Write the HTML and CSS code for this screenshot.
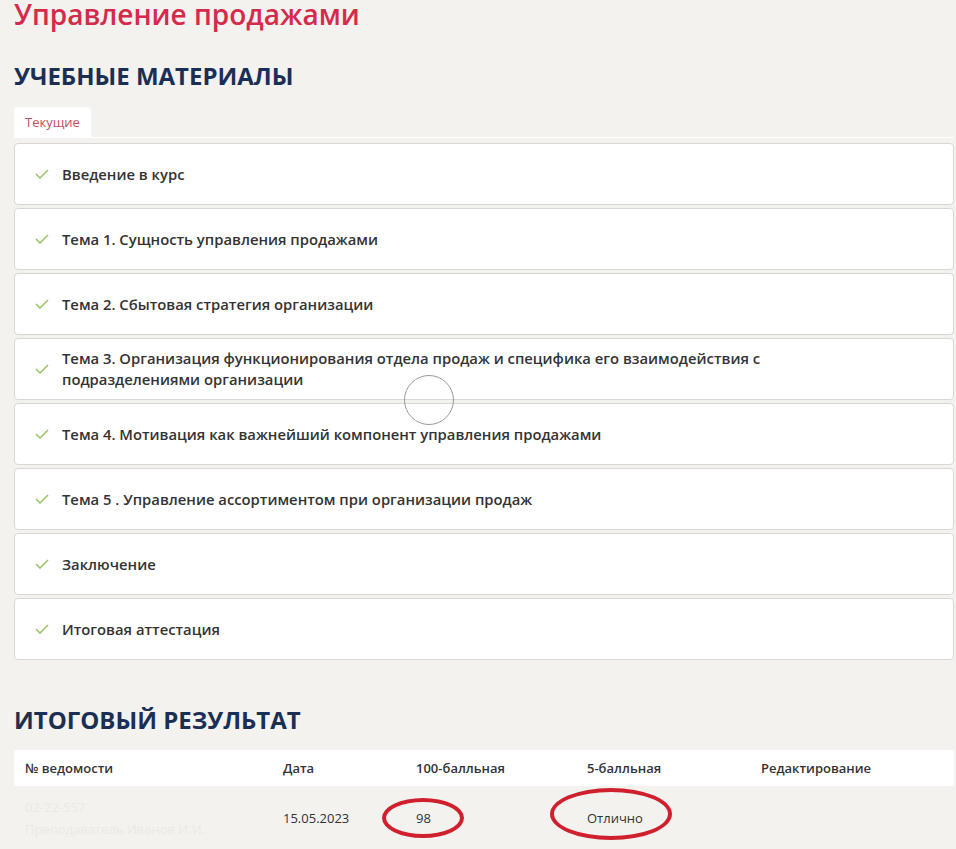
FILE: index.html
```html
<!DOCTYPE html>
<html lang="ru">
<head>
    <meta charset="UTF-8">
    <title>Управление продажами</title>
    <link rel="stylesheet" href="styles.css">
</head>
<body>
    <div class="page">
        <h1 class="course-title">Управление продажами</h1>

        <h2 class="section-title">УЧЕБНЫЕ МАТЕРИАЛЫ</h2>
        <div class="tabs">
            <div class="tab active">Текущие</div>
        </div>

        <div class="topics">
            <div class="topic"><svg class="check" viewBox="0 0 14 10"><polyline points="1,5 5,9 13,1"/></svg><span class="topic-name">Введение в курс</span></div>
            <div class="topic"><svg class="check" viewBox="0 0 14 10"><polyline points="1,5 5,9 13,1"/></svg><span class="topic-name">Тема 1. Сущность управления продажами</span></div>
            <div class="topic"><svg class="check" viewBox="0 0 14 10"><polyline points="1,5 5,9 13,1"/></svg><span class="topic-name">Тема 2. Сбытовая стратегия организации</span></div>
            <div class="topic"><svg class="check" viewBox="0 0 14 10"><polyline points="1,5 5,9 13,1"/></svg><span class="topic-name">Тема 3. Организация функционирования отдела продаж и специфика его взаимодействия с<br>подразделениями организации</span></div>
            <div class="topic"><svg class="check" viewBox="0 0 14 10"><polyline points="1,5 5,9 13,1"/></svg><span class="topic-name">Тема 4. Мотивация как важнейший компонент управления продажами</span></div>
            <div class="topic"><svg class="check" viewBox="0 0 14 10"><polyline points="1,5 5,9 13,1"/></svg><span class="topic-name">Тема 5 . Управление ассортиментом при организации продаж</span></div>
            <div class="topic"><svg class="check" viewBox="0 0 14 10"><polyline points="1,5 5,9 13,1"/></svg><span class="topic-name">Заключение</span></div>
            <div class="topic"><svg class="check" viewBox="0 0 14 10"><polyline points="1,5 5,9 13,1"/></svg><span class="topic-name">Итоговая аттестация</span></div>
            <div class="touch-ring"></div>
        </div>

        <h2 class="section-title result-title">ИТОГОВЫЙ РЕЗУЛЬТАТ</h2>
        <div class="result-table">
            <div class="result-row result-head">
                <div>№ ведомости</div>
                <div>Дата</div>
                <div>100-балльная</div>
                <div>5-балльная</div>
                <div>Редактирование</div>
            </div>
            <div class="result-row">
                <div class="hidden-info">
                    <div>02-22-557</div>
                    <div>Преподаватель Иванов И.И.</div>
                </div>
                <div>15.05.2023</div>
                <div><span class="marked mark-score">98</span></div>
                <div><span class="marked mark-grade">Отлично</span></div>
                <div></div>
            </div>
        </div>
    </div>
</body>
</html>
```

FILE: styles.css
```css
body {
    margin: 0;
    background-color: #f3f2ef;
    font-family: "Open Sans", Arial, sans-serif;
    color: #333;
}
.page {
    padding: 0 2px 0 14px;
    overflow: hidden;
    height: 849px;
}
.course-title {
    margin: 0;
    font-size: 28px;
    font-weight: 600;
    line-height: 28px;
    color: #d42a4c;
}
.section-title {
    margin: 32px 0 0 0;
    font-size: 24px;
    font-weight: 700;
    line-height: 32px;
    color: #1b2f55;
}
.tabs {
    display: flex;
    margin-top: 15px;
    border-bottom: 1px solid #fff;
}
.tab {
    padding: 0 11px;
    height: 30px;
    line-height: 30px;
    font-size: 13px;
    color: #c54b63;
    background-color: #fff;
    border-radius: 4px 4px 0 0;
}
.topics {
    position: relative;
    display: flex;
    flex-direction: column;
    gap: 3px;
    margin-top: 5px;
}
.topic {
    display: flex;
    align-items: center;
    min-height: 60px;
    padding: 0 20px;
    background-color: #fff;
    border: 1px solid #d9d7d4;
    border-radius: 4px;
    font-size: 14.8px;
    font-weight: 600;
    line-height: 21px;
    color: #333;
}
.check {
    flex: none;
    width: 14px;
    height: 10px;
    margin-right: 13px;
    fill: none;
    stroke: #9cc46a;
    stroke-width: 1.6;
}
.touch-ring {
    position: absolute;
    left: 390px;
    top: 232px;
    width: 48px;
    height: 48px;
    border: 1px solid #9a9a9a;
    border-radius: 50%;
}
.result-title {
    margin-top: 44px;
}
.result-table {
    margin-top: 14px;
}
.result-row {
    display: grid;
    grid-template-columns: 258px 133px 171px 174px 1fr;
    align-items: center;
    padding: 0 11px;
    font-size: 13px;
}
.result-head {
    height: 36px;
    background-color: #fff;
    border-radius: 3px;
    font-weight: 600;
    color: #333;
}
.result-row:not(.result-head) {
    height: 64px;
    color: #333;
}
.hidden-info {
    color: #ebe9e6;
    line-height: 22px;
}
.marked {
    position: relative;
}
.marked::after {
    content: "";
    position: absolute;
    border: 4px solid #d0202e;
    border-radius: 50%;
}
.mark-score::after {
    left: -34px;
    top: -11px;
    width: 74px;
    height: 32px;
}
.mark-grade::after {
    left: -37px;
    top: -21px;
    width: 114px;
    height: 44px;
}
```
